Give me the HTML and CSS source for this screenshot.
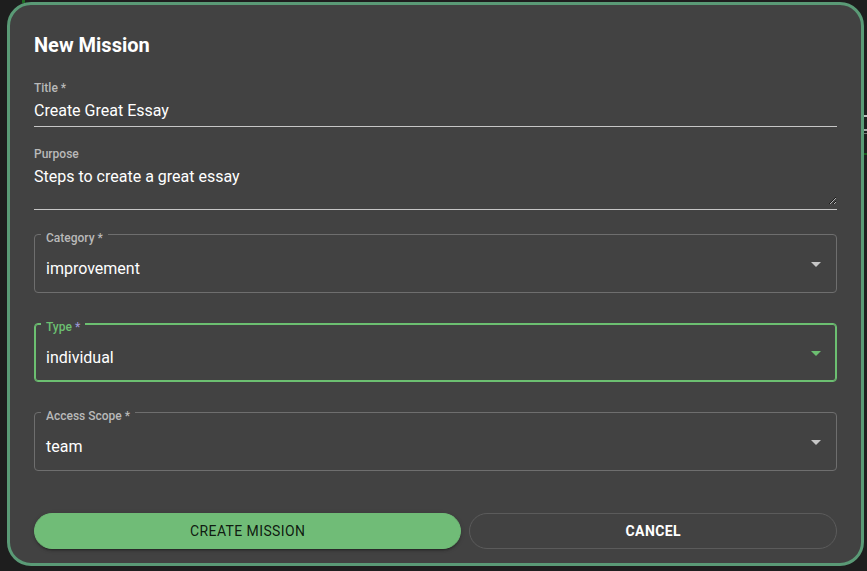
FILE: index.html
```html
<!DOCTYPE html>
<html lang="en">
<head>
<meta charset="utf-8">
<title>New Mission</title>
<link rel="stylesheet" href="styles.css">
</head>
<body>
<div class="page-behind" aria-hidden="true">
  <span class="bit bit-green-top"></span>
  <span class="bit bit-line-a"></span>
  <span class="bit bit-line-b"></span>
  <span class="bit bit-line-c"></span>
  <span class="bit bit-green-right"></span>
</div>
<div class="dialog" role="dialog" aria-labelledby="dlg-title">
  <h2 class="dialog-title" id="dlg-title">New Mission</h2>

  <div class="field field-first">
    <label class="std-label" for="f-title">Title *</label>
    <div class="std-input">
      <input id="f-title" class="std-control" type="text" value="Create Great Essay">
    </div>
  </div>

  <div class="field">
    <label class="std-label" for="f-purpose">Purpose</label>
    <div class="std-input">
      <textarea id="f-purpose" class="std-control std-area">Steps to create a great essay</textarea>
    </div>
  </div>

  <div class="select select-first">
    <span class="select-label">Category *</span>
    <div class="select-value">improvement</div>
    <svg class="select-arrow" viewBox="0 0 24 24" width="24" height="24"><path d="M7 10l5 5 5-5z"/></svg>
  </div>

  <div class="select select-focused">
    <span class="select-label">Type <span class="asterisk">*</span></span>
    <div class="select-value">individual</div>
    <svg class="select-arrow" viewBox="0 0 24 24" width="24" height="24"><path d="M7 10l5 5 5-5z"/></svg>
  </div>

  <div class="select">
    <span class="select-label">Access Scope *</span>
    <div class="select-value">team</div>
    <svg class="select-arrow" viewBox="0 0 24 24" width="24" height="24"><path d="M7 10l5 5 5-5z"/></svg>
  </div>

  <div class="actions">
    <button class="btn btn-primary" type="button">Create Mission</button>
    <button class="btn btn-outline" type="button">Cancel</button>
  </div>
</div>
</body>
</html>
```

FILE: styles.css
```css
html, body {
  margin: 0;
  padding: 0;
}

body {
  background: #1e1e1e;
  font-family: Roboto, "Liberation Sans", sans-serif;
  width: 867px;
  height: 571px;
  overflow: hidden;
  position: relative;
}

/* bits of the page lying behind the dialog */
.page-behind {
  position: absolute;
  inset: 0;
  z-index: 0;
}
.bit {
  position: absolute;
  display: block;
}
.bit-green-top { left: 22px; top: 0; width: 3px; height: 3px; background: #1d6b22; }
.bit-line-a { left: 862px; top: 115px; width: 5px; height: 2px; background: #bdbdbd; }
.bit-line-b { left: 862px; top: 129px; width: 5px; height: 2px; background: #a8a8a8; }
.bit-line-c { left: 862px; top: 133px; width: 5px; height: 1px; background: #7a7a7a; }
.bit-green-right { left: 862px; top: 153px; width: 5px; height: 2px; background: #1b5e20; }

.dialog {
  position: relative;
  z-index: 1;
  box-sizing: border-box;
  margin: 2px 0 0 7px;
  width: 857px;
  height: 564px;
  border: 3px solid #5a9a76;
  border-radius: 24px;
  background: #424242;
  padding: 24px 24px 0 24px;
  color: #fff;
}

.dialog-title {
  margin: 0;
  font-size: 20px;
  line-height: 32px;
  font-weight: 700;
  color: #fff;
}

/* standard (underlined) fields */
.field {
  margin-top: 19px;
}
.std-label {
  display: block;
  font-size: 12px;
  line-height: 16px;
  color: #b9b9b9;
  font-weight: 500;
}
.std-input {
  padding: 3px 0 4px;
  border-bottom: 1px solid #c6c6c6;
}
.std-control {
  display: block;
  width: 100%;
  box-sizing: border-box;
  margin: 0;
  padding: 0;
  border: 0;
  outline: 0;
  background: transparent;
  color: #fff;
  font-family: inherit;
  font-size: 16px;
  line-height: 23px;
  height: 23px;
}
.std-area {
  height: 40px;
  resize: vertical;
}

/* outlined selects */
.select {
  position: relative;
  box-sizing: border-box;
  height: 59px;
  margin-top: 30px;
  border: 1px solid #6e6e6e;
  border-radius: 4px;
  padding: 22px 11px 0;
}
.select-first {
  margin-top: 24px;
}
.select-label {
  position: absolute;
  top: -5px;
  left: 6px;
  padding: 0 5px;
  background: #424242;
  font-size: 12px;
  line-height: 16px;
  font-weight: 500;
  color: #b9b9b9;
}
.select-value {
  font-size: 16px;
  line-height: 23px;
  color: #fff;
}
.select-arrow {
  position: absolute;
  right: 8px;
  top: 50%;
  transform: translateY(-50%);
  fill: #c6c6c6;
}

.select-focused {
  border-color: #6cbf71;
  box-shadow: inset 0 0 0 1px #6cbf71;
}
.select-focused .select-label {
  color: #6cbf71;
}
.select-focused .asterisk {
  color: #9a95d0;
}
.select-focused .select-arrow {
  fill: #6cbf71;
}

/* actions */
.actions {
  display: flex;
  gap: 8px;
  margin-top: 42px;
}
.btn {
  flex: 1 1 auto;
  box-sizing: border-box;
  height: 36px;
  margin: 0;
  padding: 0 16px;
  border-radius: 18px;
  font-family: inherit;
  font-size: 14px;
  line-height: 34px;
  letter-spacing: 0.4px;
  text-transform: uppercase;
  cursor: pointer;
}
.btn-primary {
  border: 1px solid #70bc77;
  background: #70bc77;
  color: rgba(0, 0, 0, 0.87);
  font-weight: 400;
  box-shadow: 0 3px 1px -2px rgba(0, 0, 0, 0.2), 0 2px 2px 0 rgba(0, 0, 0, 0.14), 0 1px 5px 0 rgba(0, 0, 0, 0.12);
}
.btn-outline {
  border: 1px solid #5b5b5b;
  background: transparent;
  color: #fff;
  font-weight: 700;
}
```
